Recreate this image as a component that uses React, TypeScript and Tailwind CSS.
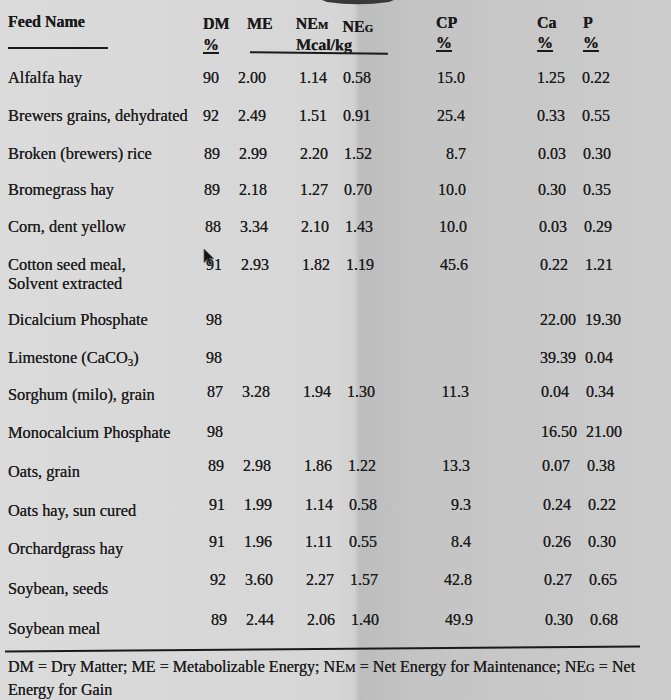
import React from "react";

type Row = {
  name: React.ReactNode;
  dm: string;
  me?: string;
  nem?: string;
  neg?: string;
  cp?: string;
  ca: string;
  p: string;
  h: string;
  dx: string;
  drop: string;
  cursor?: boolean;
};

const rows: Row[] = [
  { name: "Alfalfa hay", dm: "90", me: "2.00", nem: "1.14", neg: "0.58", cp: "15.0", ca: "1.25", p: "0.22", h: "h-[38px]", dx: "pl-[0px]", drop: "pt-[0px]" },
  { name: "Brewers grains, dehydrated", dm: "92", me: "2.49", nem: "1.51", neg: "0.91", cp: "25.4", ca: "0.33", p: "0.55", h: "h-[38px]", dx: "pl-[0px]", drop: "pt-[0px]" },
  { name: "Broken (brewers) rice", dm: "89", me: "2.99", nem: "2.20", neg: "1.52", cp: "8.7", ca: "0.03", p: "0.30", h: "h-[36px]", dx: "pl-[1px]", drop: "pt-[0px]" },
  { name: "Bromegrass hay", dm: "89", me: "2.18", nem: "1.27", neg: "0.70", cp: "10.0", ca: "0.30", p: "0.35", h: "h-[37px]", dx: "pl-[1px]", drop: "pt-[0px]" },
  { name: "Corn, dent yellow", dm: "88", me: "3.34", nem: "2.10", neg: "1.43", cp: "10.0", ca: "0.03", p: "0.29", h: "h-[38px]", dx: "pl-[2px]", drop: "pt-[0px]" },
  {
    name: (
      <span className="block leading-[19px]">
        Cotton seed meal,
        <br />
        Solvent extracted
      </span>
    ),
    dm: "91", me: "2.93", nem: "1.82", neg: "1.19", cp: "45.6", ca: "0.22", p: "1.21", h: "h-[55px]", dx: "pl-[3px]", drop: "pt-[0px]", cursor: true,
  },
  { name: "Dicalcium Phosphate", dm: "98", ca: "22.00", p: "19.30", h: "h-[38px]", dx: "pl-[3px]", drop: "pt-[0px]" },
  {
    name: (
      <>
        Limestone (CaCO<sub className="text-[11px]">3</sub>)
      </>
    ),
    dm: "98", ca: "39.39", p: "0.04", h: "h-[34px]", dx: "pl-[3px]", drop: "pt-[0px]",
  },
  { name: "Sorghum (milo), grain", dm: "87", me: "3.28", nem: "1.94", neg: "1.30", cp: "11.3", ca: "0.04", p: "0.34", h: "h-[40px]", dx: "pl-[4px]", drop: "pt-[3px]" },
  { name: "Monocalcium Phosphate", dm: "98", ca: "16.50", p: "21.00", h: "h-[34px]", dx: "pl-[4px]", drop: "pt-[1px]" },
  { name: "Oats, grain", dm: "89", me: "2.98", nem: "1.86", neg: "1.22", cp: "13.3", ca: "0.07", p: "0.38", h: "h-[39px]", dx: "pl-[5px]", drop: "pt-[6px]" },
  { name: "Oats hay, sun cured", dm: "91", me: "1.99", nem: "1.14", neg: "0.58", cp: "9.3", ca: "0.24", p: "0.22", h: "h-[37px]", dx: "pl-[6px]", drop: "pt-[6px]" },
  { name: "Orchardgrass hay", dm: "91", me: "1.96", nem: "1.11", neg: "0.55", cp: "8.4", ca: "0.26", p: "0.30", h: "h-[38px]", dx: "pl-[6px]", drop: "pt-[7px]" },
  { name: "Soybean, seeds", dm: "92", me: "3.60", nem: "2.27", neg: "1.57", cp: "42.8", ca: "0.27", p: "0.65", h: "h-[40px]", dx: "pl-[7px]", drop: "pt-[9px]" },
  { name: "Soybean meal", dm: "89", me: "2.44", nem: "2.06", neg: "1.40", cp: "49.9", ca: "0.30", p: "0.68", h: "h-[29px]", dx: "pl-[8px]", drop: "pt-[9px]" },
];

function Cursor() {
  return (
    <svg
      className="absolute left-[-3px] top-[-7px]"
      width="12"
      height="18"
      viewBox="0 0 12 18"
    >
      <path
        d="M1 1 L1 14.5 L4.3 11.4 L6.6 16.8 L8.8 15.9 L6.5 10.6 L10.8 10.6 Z"
        fill="#141414"
        stroke="#5a5a5a"
        strokeWidth="0.8"
      />
    </svg>
  );
}

function DataRow({ row }: { row: Row }) {
  return (
    <div className={`flex items-start ${row.h}`}>
      <div className={`w-[195px] shrink-0 text-[16.4px] ${row.drop}`}>{row.name}</div>
      <div className={`flex ${row.dx}`}>
        <div className="relative w-[33px]">
          {row.cursor && <Cursor />}
          {row.dm}
        </div>
        <div className="w-[60px] pl-[2px]">{row.me}</div>
        <div className="w-[45px] pl-[3px]">{row.nem}</div>
        <div className="w-[59px] pl-[2px]">{row.neg}</div>
        <div className="w-[65px] text-right">{row.cp}</div>
        <div className="w-[117px] pl-[72px]">{row.ca}</div>
        <div className="w-[50px]">{row.p}</div>
      </div>
    </div>
  );
}

export default function App() {
  return (
    <div className="relative h-[700px] w-[671px] overflow-hidden bg-[linear-gradient(90deg,#dbdbdb_0%,#d6d6d6_50%,#d1d1d1_52.8%,#bdbdbd_53.6%,#c4c4c4_62%,#c9c9c9_85%,#cdcdcd_100%)] px-[8px] font-['Liberation_Serif',serif] text-[16px] leading-[20px] text-[#1e1e1e] [text-shadow:0_0_0.6px_#2a2a2a]">
      {/* paper edge peeking at the top */}
      <svg className="absolute left-[322px] top-0" width="72" height="6" viewBox="0 0 72 6">
        <path d="M0 0 L72 0 L67 2 Q36 6.5 5 2 Z" fill="#383838" />
      </svg>

      {/* header */}
      <div className="flex h-[68px] pt-[12px] font-bold text-[#1a1a1a]">
        <div className="w-[195px] shrink-0">
          <div>Feed Name</div>
          <div className="mt-[15px] h-[2px] w-[100px] bg-[#1a1a1a]" />
        </div>
        <div className="w-[33px] pt-[2px]">
          <div>DM</div>
          <div className="mt-[1px] underline decoration-2 underline-offset-2">%</div>
        </div>
        <div className="w-[164px] pt-[2px]">
          <div className="flex">
            <span className="pl-[11px]">ME</span>
            <span className="pl-[23px]">
              NE<span className="text-[11px]">M</span>
            </span>
            <span className="pl-[14px] pt-[3px]">
              NE<span className="text-[11px]">G</span>
            </span>
          </div>
          <div className="ml-[14px] mt-[-2px] h-[18px] w-[138px] rotate-[0.6deg] border-b-2 border-[#1a1a1a] pl-[46px] leading-[18px]">
            Mcal/kg
          </div>
        </div>
        <div className="w-[65px] pl-[36px] pt-[1px]">
          <div>CP</div>
          <div className="underline decoration-2 underline-offset-2">%</div>
        </div>
        <div className="w-[117px] pl-[72px] pt-[1px]">
          <div>Ca</div>
          <div className="underline decoration-2 underline-offset-2">%</div>
        </div>
        <div className="w-[50px] pl-[1px] pt-[1px]">
          <div>P</div>
          <div className="underline decoration-2 underline-offset-2">%</div>
        </div>
      </div>

      {/* rows */}
      <div className="flex flex-col">
        {rows.map((row, i) => (
          <DataRow key={i} row={row} />
        ))}
      </div>

      {/* footer */}
      <div className="mt-[9px] ml-[-3px] h-[2px] w-[635px] rotate-[-0.45deg] bg-[#1a1a1a]" />
      <p className="mt-[6px] text-[16.1px] leading-[21px]">
        DM = Dry Matter; ME = Metabolizable Energy; NE<span className="text-[12px]">M</span> = Net Energy for
        Maintenance; NE<span className="text-[12px]">G</span> = Net
        <br />
        Energy for Gain
      </p>
    </div>
  );
}
